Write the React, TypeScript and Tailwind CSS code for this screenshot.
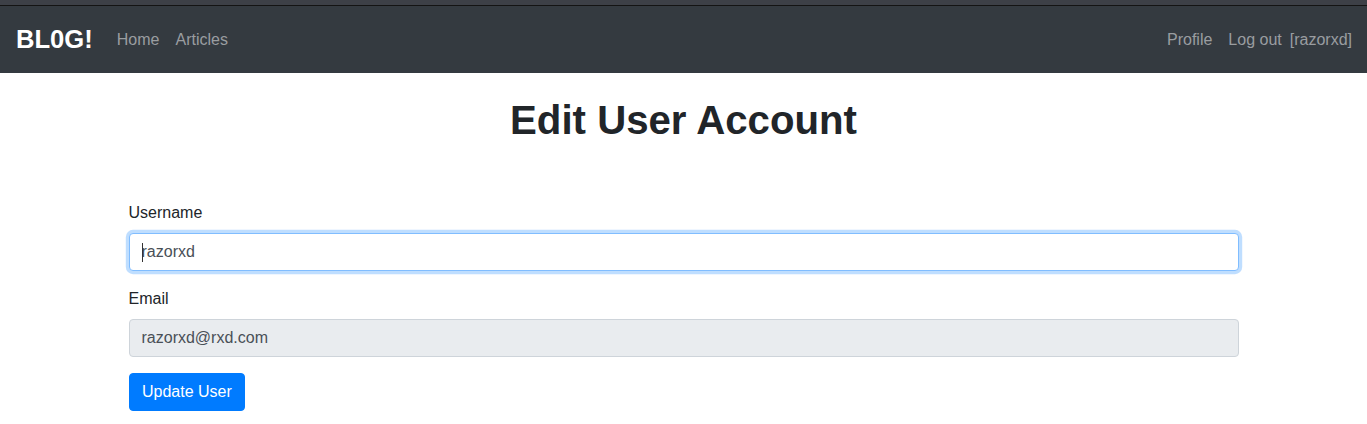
import React from "react";

export default function App() {
  return (
    <div className="min-h-[424px] bg-white text-[#212529]" style={{ fontFamily: '"Liberation Sans", Arial, sans-serif' }}>
      <div className="h-[5px] bg-[#3d4047]" />
      <div className="h-px bg-[#141414]" />
      <nav className="flex h-[67px] items-center bg-[#343a40] pl-4 pr-[15px]">
        <a className="mr-4 text-[25.6px] font-bold leading-none text-white">BL0G!</a>
        <a className="px-2 text-base text-[#9a9da0]">Home</a>
        <a className="px-2 text-base text-[#9a9da0]">Articles</a>
        <div className="ml-auto flex items-center">
          <a className="px-2 text-base text-[#9a9da0]">Profile</a>
          <a className="px-2 text-base text-[#9a9da0]">Log out</a>
          <span className="text-base text-[#9a9da0]">[razorxd]</span>
        </div>
      </nav>
      <div className="mx-auto w-[1140px] px-[15px]">
        <h1 className="mt-6 mb-14 text-center text-[40.2px] font-bold leading-[48px]">Edit User Account</h1>
        <div className="mb-4">
          <label className="mb-2 block text-base leading-6">Username</label>
          <div className="relative">
            <input
              readOnly
              value="razorxd"
              className="block h-[38px] w-full rounded border border-[#80bdff] bg-white px-3 text-base text-[#495057] shadow-[0_0_0_3.2px_rgba(0,123,255,0.25)] outline-none"
            />
            <span className="absolute left-[13px] top-[10px] h-[19px] w-px bg-[#333]" />
          </div>
        </div>
        <div className="mb-4">
          <label className="mb-2 block text-base leading-6">Email</label>
          <input
            readOnly
            value="razorxd@rxd.com"
            className="block h-[38px] w-full rounded border border-[#ced4da] bg-[#e9ecef] px-3 text-base text-[#495057] outline-none"
          />
        </div>
        <button className="h-[38px] rounded border border-[#007bff] bg-[#007bff] px-[12.5px] text-base leading-6 text-white">Update User</button>
      </div>
    </div>
  );
}
